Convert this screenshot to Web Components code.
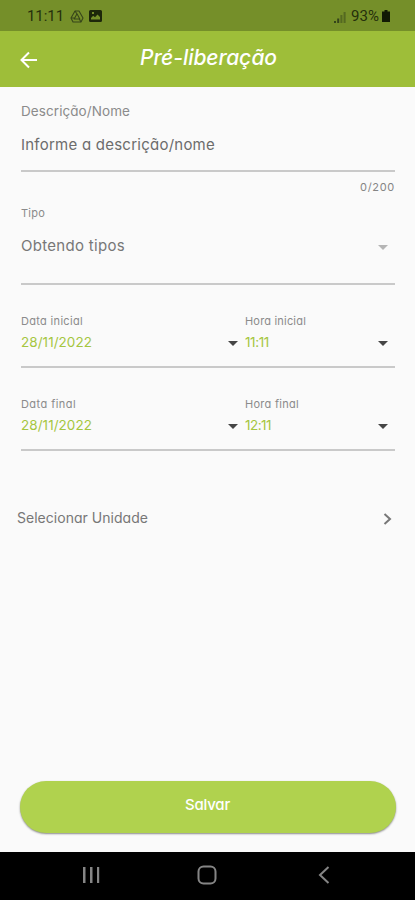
<!DOCTYPE html>
<html lang="pt-BR">
<head>
<meta charset="utf-8">
<title>Pré-liberação</title>
<style>
    body {
        margin: 0;
        background: #fafafa;
    }
</style>
</head>
<body>
<release-page></release-page>

<script>
// Text that spreads its letters to fill the given width
class FitText extends HTMLElement {
    constructor(){
        super();
        this.attachShadow({mode: 'open'});
        this.shadowRoot.innerHTML = /* html */ `
            <style>
                :host { display: block; white-space: nowrap; }
                span { display: inline-block; }
            </style>
            <span><slot></slot></span>
        `;
    }

    connectedCallback(){
        const span = this.shadowRoot.querySelector('span');
        const count = this.textContent.length;
        const extra = Number(this.getAttribute('width')) - span.getBoundingClientRect().width;
        span.style.letterSpacing = `${extra / count}px`;
    }
}

class StatusBar extends HTMLElement {
    constructor(){
        super();
        this.attachShadow({mode: 'open'});
        this.shadowRoot.innerHTML = /* html */ `
            <style>
                :host {
                    display: flex;
                    align-items: center;
                    height: 31px;
                    box-sizing: border-box;
                    padding: 1px 25px 0 27px;
                    background: #758f29;
                    color: #25300c;
                    font: 15px/20px Roboto, sans-serif;
                }
                svg { display: block; }
                .drive { margin-left: 6px; }
                .image { margin-left: 5px; }
                .signal { margin: 1px 5px 0 auto; }
                .battery { margin-left: 3px; }
            </style>
            <fit-text width="37">11:11</fit-text>
            <svg class="drive" width="14" height="13" viewBox="0 0 14 13" fill="none" stroke="#36451a" stroke-width="1.1" stroke-linejoin="round">
                <path d="M5 1h4l4 7-2 4H3L1 8z"/>
                <path d="M7 3.8L4.2 9h5.6zM5 1l2 3M1 8h3.4M11 12L9.3 9"/>
            </svg>
            <svg class="image" width="13" height="12" viewBox="0 0 13 12">
                <path fill="#1d270a" fill-rule="evenodd" d="M1.500 0h10A1.500 1.500 0 0 1 13 1.500v9a1.500 1.500 0 0 1-1.500 1.500h-10A1.500 1.500 0 0 1 0 10.500v-9A1.500 1.500 0 0 1 1.500 0zM2 9.500h9V7L8.500 4.500 6 7.300 4.200 5.800 2 8zM3 2v2h2V2z"/>
            </svg>
            <svg class="signal" width="12" height="12" viewBox="0 0 12 12" fill="#34431a">
                <path d="M0 10h2v2H0zM3.200 7.500h2V12h-2z"/>
                <path d="M6.400 4h2v8h-2zM9.600 1h2v11h-2z" opacity=".5"/>
            </svg>
            <fit-text width="28">93%</fit-text>
            <svg class="battery" width="8" height="12" viewBox="0 0 8 12">
                <path fill="#121a04" d="M2.500 0h3v1.500H8V12H0V1.500h2.500z"/>
            </svg>
        `;
    }
}

class AppBar extends HTMLElement {
    constructor(){
        super();
        this.attachShadow({mode: 'open'});
        this.shadowRoot.innerHTML = /* html */ `
            <style>
                :host {
                    display: grid;
                    grid-template-columns: 60px 1fr 60px;
                    align-items: center;
                    height: 56px;
                    background: #9ebe39;
                    color: #fff;
                    font-size: 21px;
                    font-style: italic;
                    font-weight: 500;
                    line-height: 24px;
                }
                svg { display: block; margin: 1px 0 0 20px; }
                .title { justify-self: center; margin: 0 0 3px 2px; }
            </style>
            <svg width="18" height="18" viewBox="0 0 18 18" fill="none" stroke="#fff" stroke-width="2">
                <path d="M17 9H2.500M9 1.500L1.500 9 9 16.500"/>
            </svg>
            <div class="title"><slot></slot></div>
        `;
    }
}

// Underlined row: fields go in the default slot, side by side
class FormRow extends HTMLElement {
    constructor(){
        super();
        this.attachShadow({mode: 'open'});
        this.shadowRoot.innerHTML = /* html */ `
            <style>
                :host {
                    display: flex;
                    box-sizing: border-box;
                    margin: 0 20px 0 21px;
                    border-bottom: 2px solid #c9c9c9;
                }
            </style>
            <slot></slot>
        `;
    }
}

class FormField extends HTMLElement {
    constructor(){
        super();
        this.attachShadow({mode: 'open'});
        const arrow = this.getAttribute('arrow');
        this.shadowRoot.innerHTML = /* html */ `
            <style>
                :host { display: block; flex: 1; }
                .label {
                    color: #8b8b8b;
                    font-size: var(--label-size, 11px);
                    line-height: 16px;
                }
                .value {
                    display: flex;
                    align-items: center;
                    justify-content: space-between;
                    margin-top: var(--gap, 4px);
                    padding-right: 7px;
                    color: var(--value-color, #a5c63f);
                    font-size: var(--value-size, 13.5px);
                    line-height: 18px;
                }
                svg { display: block; margin-top: 2px; }
            </style>
            <div class="label"><slot name="label"></slot></div>
            <div class="value">
                <slot></slot>
                ${arrow ? `<svg width="10" height="5" viewBox="0 0 10 5"><path fill="${arrow}" d="M0 0h10L5 5z"/></svg>` : ''}
            </div>
        `;
    }
}

class UnitLink extends HTMLElement {
    constructor(){
        super();
        this.attachShadow({mode: 'open'});
        this.shadowRoot.innerHTML = /* html */ `
            <style>
                :host {
                    display: flex;
                    align-items: center;
                    justify-content: space-between;
                    padding: 0 23px 0 17px;
                    color: #777;
                    font-size: 14px;
                    line-height: 20px;
                }
                svg { display: block; margin-top: 2px; }
            </style>
            <slot></slot>
            <svg width="9" height="12" viewBox="0 0 9 12" fill="none" stroke="#777" stroke-width="2">
                <path d="M1.500 1L7 6l-5.500 5"/>
            </svg>
        `;
    }
}

class SaveButton extends HTMLElement {
    constructor(){
        super();
        this.attachShadow({mode: 'open'});
        this.shadowRoot.innerHTML = /* html */ `
            <style>
                :host { display: block; margin: auto 19px 19px 20px; }
                button {
                    display: flex;
                    justify-content: center;
                    align-items: center;
                    width: 100%;
                    height: 52px;
                    padding: 0 1px 5px 0;
                    border: 0;
                    border-radius: 26px;
                    background: #b0d24e;
                    box-shadow: 0 1px 2px rgba(0, 0, 0, .45);
                    color: #fff;
                    font: inherit;
                    font-size: 15px;
                    font-weight: 500;
                }
            </style>
            <button type="button"><slot></slot></button>
        `;
    }
}

class NavigationBar extends HTMLElement {
    constructor(){
        super();
        this.attachShadow({mode: 'open'});
        this.shadowRoot.innerHTML = /* html */ `
            <style>
                :host {
                    display: flex;
                    align-items: center;
                    justify-content: space-between;
                    box-sizing: border-box;
                    height: 48px;
                    padding: 0 85px 2px 82px;
                    background: #000;
                }
                svg { display: block; }
                .home { margin-right: 4px; }
            </style>
            <svg width="18" height="18" viewBox="0 0 18 18" fill="#858585">
                <path d="M1 1h2.500v16H1zM8 1h2.500v16H8zM15 1h2.200v16H15z"/>
            </svg>
            <svg class="home" width="20" height="20" viewBox="0 0 20 20" fill="none" stroke="#858585" stroke-width="2">
                <rect x="1.500" y="1.500" width="17" height="17" rx="5"/>
            </svg>
            <svg width="12" height="18" viewBox="0 0 12 18" fill="none" stroke="#858585" stroke-width="2">
                <path d="M10.500 1L2 9l8.500 8"/>
            </svg>
        `;
    }
}

class ReleasePage extends HTMLElement {
    constructor(){
        super();
        this.attachShadow({mode: 'open'});
        this.shadowRoot.innerHTML = /* html */ `
            <style>
                :host {
                    display: flex;
                    flex-direction: column;
                    height: 900px;
                    background: #fafafa;
                    font-family: Inter, "Liberation Sans", sans-serif;
                    font-feature-settings: "cv11";
                }
                .description {
                    --label-size: 13.5px;
                    --value-size: 15px;
                    --value-color: #6c6c6c;
                    --gap: 17px;
                    height: 69px;
                    margin-top: 16px;
                }
                .counter {
                    align-self: flex-end;
                    margin: 7px 20px 0 0;
                    color: #858585;
                    font-size: 11px;
                    line-height: 16px;
                }
                .type {
                    --label-size: 11px;
                    --value-size: 15px;
                    --value-color: #777;
                    --gap: 16px;
                    height: 80px;
                    margin-top: 10px;
                }
                .date {
                    height: 55px;
                    margin-top: 28px;
                }
                .date form-field:last-child { flex: 0 0 150px; }
                unit-link { margin-top: 57px; }
            </style>
            <status-bar></status-bar>
            <app-bar><fit-text width="137">Pré-liberação</fit-text></app-bar>
            <form-row class="description">
                <form-field>
                    <fit-text slot="label" width="109">Descrição/Nome</fit-text>
                    <fit-text width="194">Informe a descrição/nome</fit-text>
                </form-field>
            </form-row>
            <fit-text class="counter" width="35">0/200</fit-text>
            <form-row class="type">
                <form-field arrow="#b5b5b5">
                    <fit-text slot="label" width="24">Tipo</fit-text>
                    <fit-text width="104">Obtendo tipos</fit-text>
                </form-field>
            </form-row>
            <form-row class="date">
                <form-field arrow="#454545">
                    <fit-text slot="label" width="62">Data inicial</fit-text>
                    <fit-text width="71">28/11/2022</fit-text>
                </form-field>
                <form-field arrow="#454545">
                    <fit-text slot="label" width="61">Hora inicial</fit-text>
                    <fit-text width="24">11:11</fit-text>
                </form-field>
            </form-row>
            <form-row class="date">
                <form-field arrow="#454545">
                    <fit-text slot="label" width="55">Data final</fit-text>
                    <fit-text width="71">28/11/2022</fit-text>
                </form-field>
                <form-field arrow="#454545">
                    <fit-text slot="label" width="54">Hora final</fit-text>
                    <fit-text width="26">12:11</fit-text>
                </form-field>
            </form-row>
            <unit-link><fit-text width="131">Selecionar Unidade</fit-text></unit-link>
            <save-button><fit-text width="45">Salvar</fit-text></save-button>
            <navigation-bar></navigation-bar>
        `;
    }
}

customElements.define('fit-text', FitText);
customElements.define('status-bar', StatusBar);
customElements.define('app-bar', AppBar);
customElements.define('form-row', FormRow);
customElements.define('form-field', FormField);
customElements.define('unit-link', UnitLink);
customElements.define('save-button', SaveButton);
customElements.define('navigation-bar', NavigationBar);
customElements.define('release-page', ReleasePage);
</script>
</body>
</html>
